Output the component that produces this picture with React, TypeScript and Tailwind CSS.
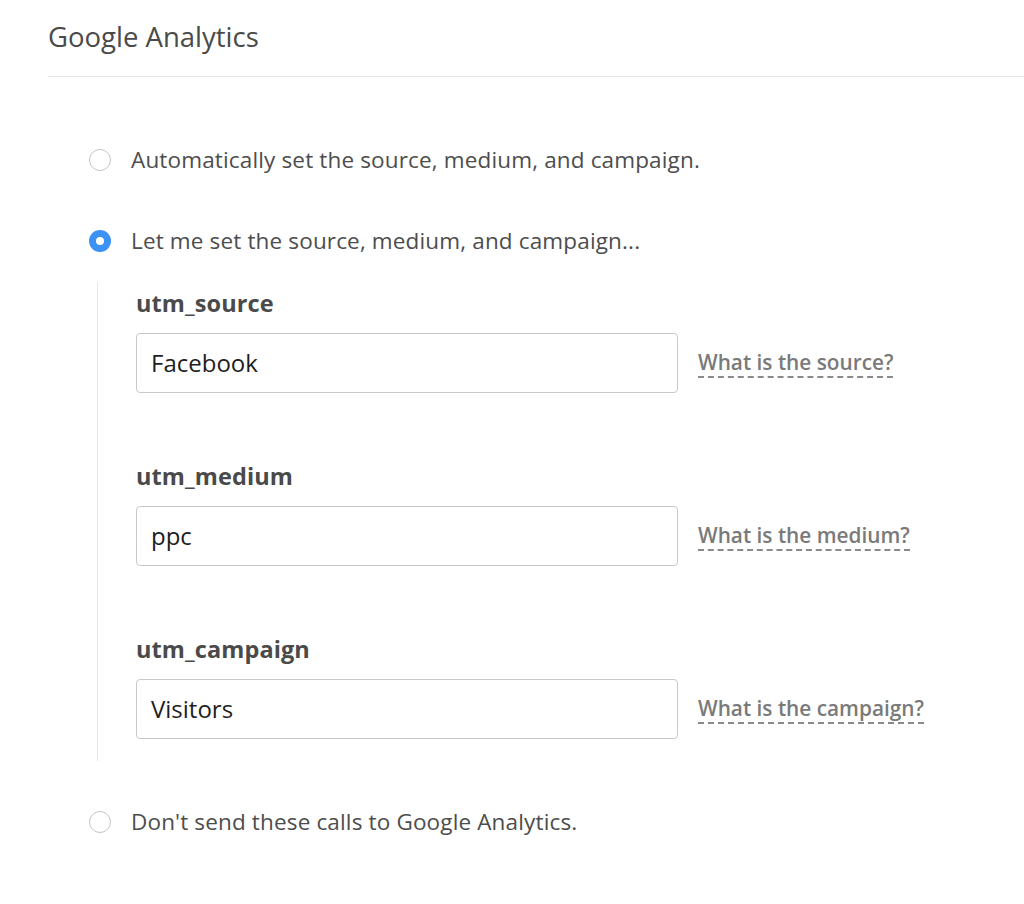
import React from "react";

const font = { fontFamily: "'Open Sans', Lato, sans-serif" };

function Radio({ checked, label }: { checked?: boolean; label: string }) {
  return (
    <div className="flex items-center h-[30px]">
      {checked ? (
        <span className="w-[22px] h-[22px] rounded-full bg-[#3b91f4] flex items-center justify-center">
          <span className="w-[8px] h-[8px] rounded-full bg-white" />
        </span>
      ) : (
        <span className="w-[22px] h-[22px] rounded-full border border-[#c4c4c4] bg-white" />
      )}
      <span className="ml-[20px] text-[22.5px] tracking-[0.15px] text-[#4d4d4d] leading-[30px]">{label}</span>
    </div>
  );
}

function Field({ name, value, help, first }: { name: string; value: string; help: string; first?: boolean }) {
  return (
    <div className={first ? "" : "mt-[69px]"}>
      <div className="h-[28px] leading-[28px] text-[23.5px] tracking-[0.1px] font-bold text-[#4a4a4a] mb-[16px]">{name}</div>
      <div className="flex items-center">
        <div className="w-[542px] h-[60px] border border-[#c9c9c9] rounded-[4px] flex items-center pl-[14px] text-[24px] text-[#1e1e1e]">
          {value}
        </div>
        <span className="ml-[20px] text-[20.8px] font-semibold text-[#7a7a7a] leading-[26px] pb-[1px] border-b-2 border-dashed border-[#8a8a8a]">
          {help}
        </span>
      </div>
    </div>
  );
}

export default function App() {
  return (
    <div className="w-[1024px] h-[904px] bg-white pl-[48px] overflow-hidden" style={font}>
      <div className="h-[77px] border-b border-[#e6e6e6] pt-[19px]">
        <div className="text-[27.5px] leading-[36px] text-[#4a4a4a]">Google Analytics</div>
      </div>
      <div className="pl-[41px] pt-[68px]">
        <Radio label="Automatically set the source, medium, and campaign." />
        <div className="mt-[51px]">
          <Radio checked label="Let me set the source, medium, and campaign..." />
        </div>
        <div className="mt-[26px] ml-[8px] border-l border-[#e6e6e6] pl-[38px] pt-[7px] pb-[22px]">
          <Field first name="utm_source" value="Facebook" help="What is the source?" />
          <Field name="utm_medium" value="ppc" help="What is the medium?" />
          <Field name="utm_campaign" value="Visitors" help="What is the campaign?" />
        </div>
        <div className="mt-[46px]">
          <Radio label="Don't send these calls to Google Analytics." />
        </div>
      </div>
    </div>
  );
}
